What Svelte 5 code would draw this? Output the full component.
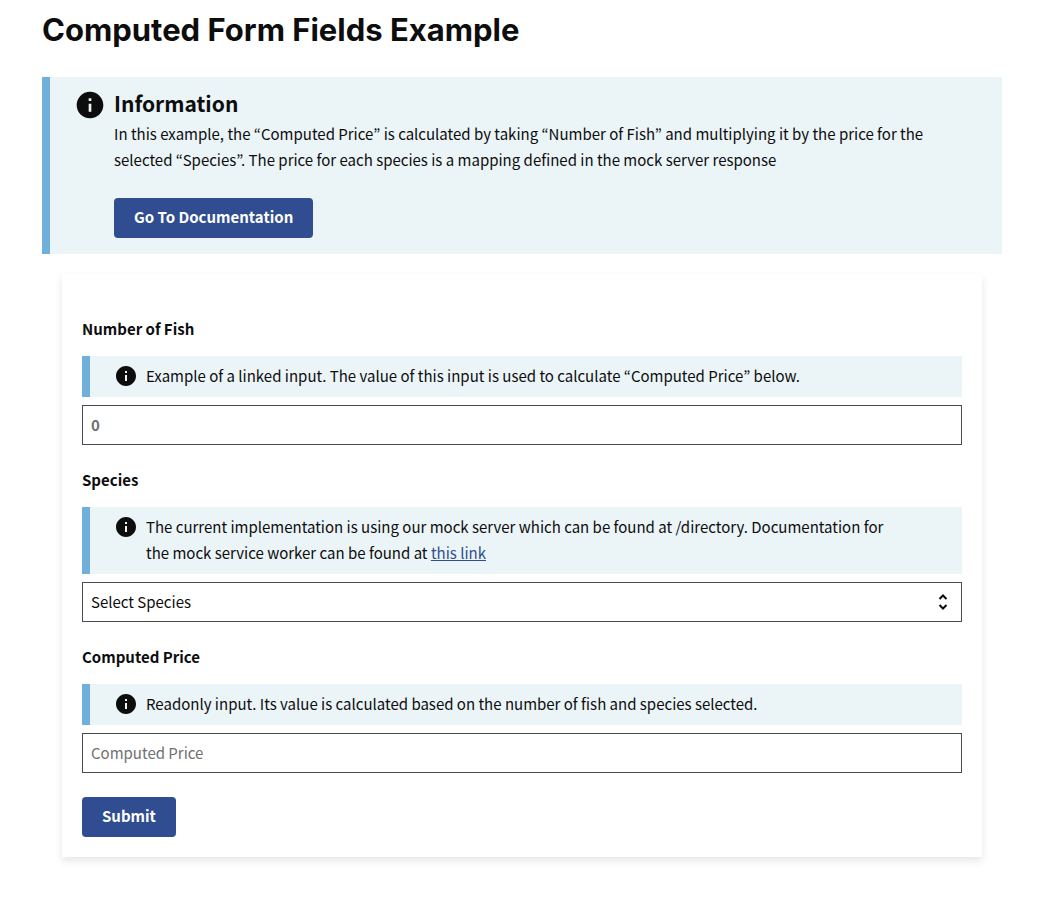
<script>
  const prices = { Bass: 4, Salmon: 12, Trout: 8 };

  let count = $state(null);
  let species = $state('');
  let total = $derived(count && species ? String(count * prices[species]) : '');
</script>

{#snippet infoIcon()}
  <svg class="icon" viewBox="0 0 24 24" aria-hidden="true">
    <path
      d="M12 2C6.480 2 2 6.480 2 12s4.480 10 10 10 10-4.480 10-10S17.520 2 12 2zm1 15h-2v-6h2v6zm0-8h-2V7h2v2z"
    />
  </svg>
{/snippet}

<main>
  <h1>Computed Form Fields Example</h1>

  <section class="alert">
    {@render infoIcon()}
    <div>
      <h2>Information</h2>
      <p>
        In this example, the “Computed Price” is calculated by taking “Number of Fish” and
        multiplying it by the price for the selected “Species”. The price for each species is a
        mapping defined in the mock server response
      </p>
      <button type="button">Go To Documentation</button>
    </div>
  </section>

  <form onsubmit={(event) => event.preventDefault()}>
    <div class="field">
      <label for="fish">Number of Fish</label>
      <div class="alert slim">
        {@render infoIcon()}
        <p>
          Example of a linked input. The value of this input is used to calculate “Computed Price”
          below.
        </p>
      </div>
      <input id="fish" class="count" type="number" min="0" placeholder="0" bind:value={count} />
    </div>

    <div class="field">
      <label for="species">Species</label>
      <div class="alert slim">
        {@render infoIcon()}
        <p>
          The current implementation is using our mock server which can be found at /directory.
          Documentation for the mock service worker can be found at <a href="#worker">this link</a>
        </p>
      </div>
      <div class="select">
        <select id="species" bind:value={species}>
          <option value="">Select Species</option>
          {#each Object.keys(prices) as name}
            <option value={name}>{name}</option>
          {/each}
        </select>
        <svg class="arrows" viewBox="0 0 20 20" aria-hidden="true">
          <path d="M6.500 7 10 3.500l3.500 3.500M6.500 13 10 16.500l3.500-3.500" />
        </svg>
      </div>
    </div>

    <div class="field">
      <label for="price">Computed Price</label>
      <div class="alert slim">
        {@render infoIcon()}
        <p>
          Readonly input. Its value is calculated based on the number of fish and species selected.
        </p>
      </div>
      <input id="price" type="text" placeholder="Computed Price" readonly value={total} />
    </div>

    <button type="submit">Submit</button>
  </form>
</main>

<style>
  :global(body) {
    margin: 0;
    background: #fff;
  }

  main {
    padding: 10px 43px 40px 42px;
    color: #0d0d0e;
    font: 15px/26px 'Source Sans Pro', 'Noto Sans CJK KR', sans-serif;
  }

  h1,
  h2,
  p {
    margin: 0;
  }

  h1 {
    margin-bottom: 27px;
    font: 700 31px/40px Inter, sans-serif;
  }

  h2 {
    margin-bottom: 4px;
    font-size: 21px;
    line-height: 28px;
  }

  .alert {
    display: flex;
    gap: 8px;
    padding: 12px 64px 16px 24px;
    border-left: 8px solid #70afda;
    background: #ebf4f7;
  }

  .icon {
    flex: none;
    width: 32px;
    height: 32px;
    fill: #0d0d0e;
  }

  .alert button {
    margin-top: 25px;
  }

  .slim {
    margin-bottom: 8px;
    padding: 7px 64px 8px 24px;
  }

  .slim .icon {
    width: 24px;
    height: 26px;
  }

  a {
    color: #2f4d90;
  }

  form {
    margin: 20px 20px 0;
    padding: 20px;
    box-shadow: 0 4px 8px rgba(0, 0, 0, 0.1);
  }

  .field {
    padding-top: 24px;
  }

  label {
    display: block;
    margin-bottom: 17px;
    font-weight: 700;
    line-height: 21px;
  }

  input,
  select {
    display: block;
    box-sizing: border-box;
    width: 100%;
    height: 40px;
    padding: 0 8px;
    border: 1px solid #4a4a54;
    border-radius: 0;
    background: #fff;
    color: inherit;
    font: inherit;
    appearance: none;
  }

  input {
    padding-bottom: 2px;
  }

  input::placeholder {
    color: #6f7072;
    opacity: 1;
  }

  .count {
    font-weight: 700;
  }

  .select {
    position: relative;
  }

  .arrows {
    position: absolute;
    top: 10px;
    right: 9px;
    width: 20px;
    height: 20px;
    fill: none;
    stroke: #0d0d0e;
    stroke-width: 2;
    pointer-events: none;
  }

  button {
    display: block;
    height: 40px;
    padding: 0 20px 2px;
    border: 0;
    border-radius: 4px;
    background: #2f4d90;
    color: #fff;
    font: inherit;
    font-weight: 700;
    cursor: pointer;
  }

  form > button {
    margin-top: 24px;
  }
</style>
